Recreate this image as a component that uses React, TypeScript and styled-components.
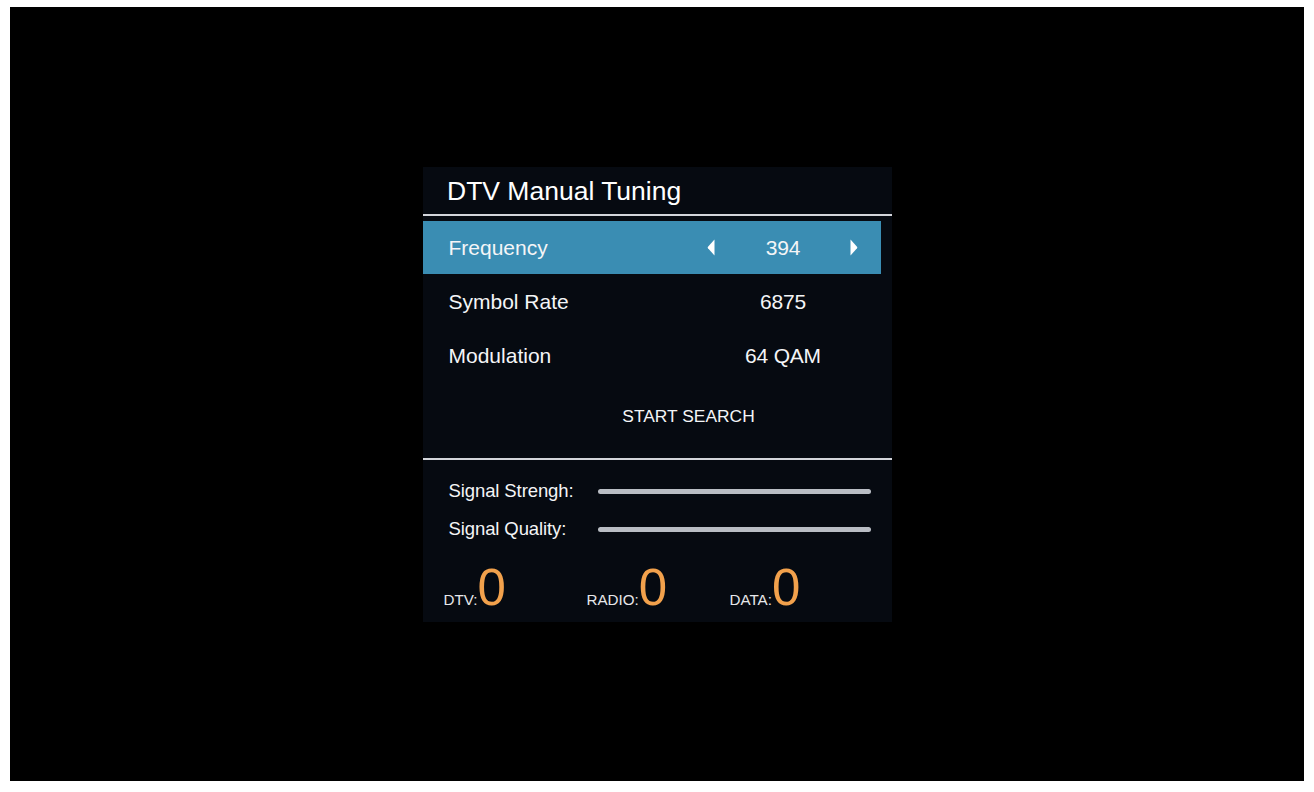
import React from "react";
import styled, { createGlobalStyle } from "styled-components";

const GlobalStyle = createGlobalStyle`
  html, body {
    margin: 0;
    padding: 0;
    background: #ffffff;
  }
  body {
    font-family: "Liberation Sans", Arial, Helvetica, sans-serif;
  }
`;

const Page = styled.div`
  width: 1314px;
  height: 792px;
  padding: 7px 10px 0 10px;
  box-sizing: border-box;
`;

const Screen = styled.div`
  width: 1294px;
  height: 774px;
  background: #000000;
  display: flex;
  align-items: center;
  justify-content: center;
`;

const Panel = styled.div`
  width: 469px;
  height: 455px;
  background: #060a11;
  display: flex;
  flex-direction: column;
  color: #f4f5f7;
`;

const Header = styled.div`
  height: 47px;
  line-height: 49px;
  padding-left: 24.5px;
  font-size: 26.5px;
  color: #ffffff;
`;

const Divider = styled.div<{ $gap?: number }>`
  height: 2px;
  background: #d3d5db;
  margin-bottom: ${(p) => p.$gap ?? 0}px;
`;

const Menu = styled.div`
  display: flex;
  flex-direction: column;
`;

const Row = styled.div<{ $active?: boolean }>`
  height: 53px;
  margin-bottom: 1px;
  width: 458.5px;
  box-sizing: border-box;
  padding: 2px 23px 0 26px;
  display: flex;
  align-items: center;
  background: ${(p) => (p.$active ? "#3a8db3" : "transparent")};
  font-size: 21px;
`;

const Label = styled.div`
  flex: 1;
`;

const ValueArea = styled.div`
  width: 151px;
  display: flex;
  align-items: center;
  justify-content: space-between;
`;

const Value = styled.div`
  flex: 1;
  text-align: center;
  letter-spacing: -0.2px;
  padding-left: 1px;
`;

const ArrowBox = styled.svg<{ $hidden?: boolean }>`
  width: 8px;
  height: 17px;
  flex: none;
  margin-top: -2px;
  visibility: ${(p) => (p.$hidden ? "hidden" : "visible")};
`;

const SearchRow = styled.div`
  height: 54px;
  margin-top: 7px;
  margin-bottom: 14.3px;
  padding-left: 63px;
  display: flex;
  align-items: center;
  justify-content: center;
  font-size: 17.4px;
  color: #f4f5f7;
`;

const SignalSection = styled.div`
  margin-top: 12.5px;
  display: flex;
  flex-direction: column;
`;

const SignalRow = styled.div`
  height: 38px;
  display: grid;
  grid-template-columns: 149.5px 1fr;
  align-items: center;
  padding: 0 21px 0 26px;
  font-size: 18.5px;
  letter-spacing: -0.1px;
`;

const Bar = styled.div`
  height: 5px;
  border-radius: 3px;
  background: #b9bdc4;
`;

const CountsRow = styled.div`
  margin-top: auto;
  padding: 0 0 8px 21px;
  display: grid;
  grid-template-columns: 143px 143px 1fr;
  align-items: baseline;
`;

const Count = styled.div`
  display: flex;
  align-items: baseline;
`;

const CountLabel = styled.span`
  font-size: 15.2px;
  color: #e6e7ea;
`;

const CountValue = styled.span`
  font-size: 51px;
  line-height: 52px;
  color: #f2a14c;
`;

const Arrow: React.FC<{ dir: "left" | "right"; hidden?: boolean }> = ({ dir, hidden }) => (
  <ArrowBox viewBox="0 0 8 17" $hidden={hidden}>
    {dir === "left" ? (
      <path d="M7.5 0.5 L7.5 16.5 L1 9.3 Q0.3 8.5 1 7.7 Z" fill="#ffffff" />
    ) : (
      <path d="M0.5 0.5 L0.5 16.5 L7 9.3 Q7.7 8.5 7 7.7 Z" fill="#ffffff" />
    )}
  </ArrowBox>
);

const rows = [
  { label: "Frequency", value: "394", active: true },
  { label: "Symbol Rate", value: "6875", active: false },
  { label: "Modulation", value: "64 QAM", active: false },
];

const counts = [
  { label: "DTV:", value: "0" },
  { label: "RADIO:", value: "0" },
  { label: "DATA:", value: "0" },
];

export default function App() {
  return (
    <>
      <GlobalStyle />
      <Page>
        <Screen>
          <Panel>
            <Header>DTV Manual Tuning</Header>
            <Divider $gap={5} />
            <Menu>
              {rows.map((r) => (
                <Row key={r.label} $active={r.active}>
                  <Label>{r.label}</Label>
                  <ValueArea>
                    <Arrow dir="left" hidden={!r.active} />
                    <Value>{r.value}</Value>
                    <Arrow dir="right" hidden={!r.active} />
                  </ValueArea>
                </Row>
              ))}
              <SearchRow>START SEARCH</SearchRow>
            </Menu>
            <Divider />
            <SignalSection>
              <SignalRow>
                <span>Signal Strengh:</span>
                <Bar />
              </SignalRow>
              <SignalRow>
                <span>Signal Quality:</span>
                <Bar />
              </SignalRow>
            </SignalSection>
            <CountsRow>
              {counts.map((c) => (
                <Count key={c.label}>
                  <CountLabel>{c.label}</CountLabel>
                  <CountValue>{c.value}</CountValue>
                </Count>
              ))}
            </CountsRow>
          </Panel>
        </Screen>
      </Page>
    </>
  );
}
